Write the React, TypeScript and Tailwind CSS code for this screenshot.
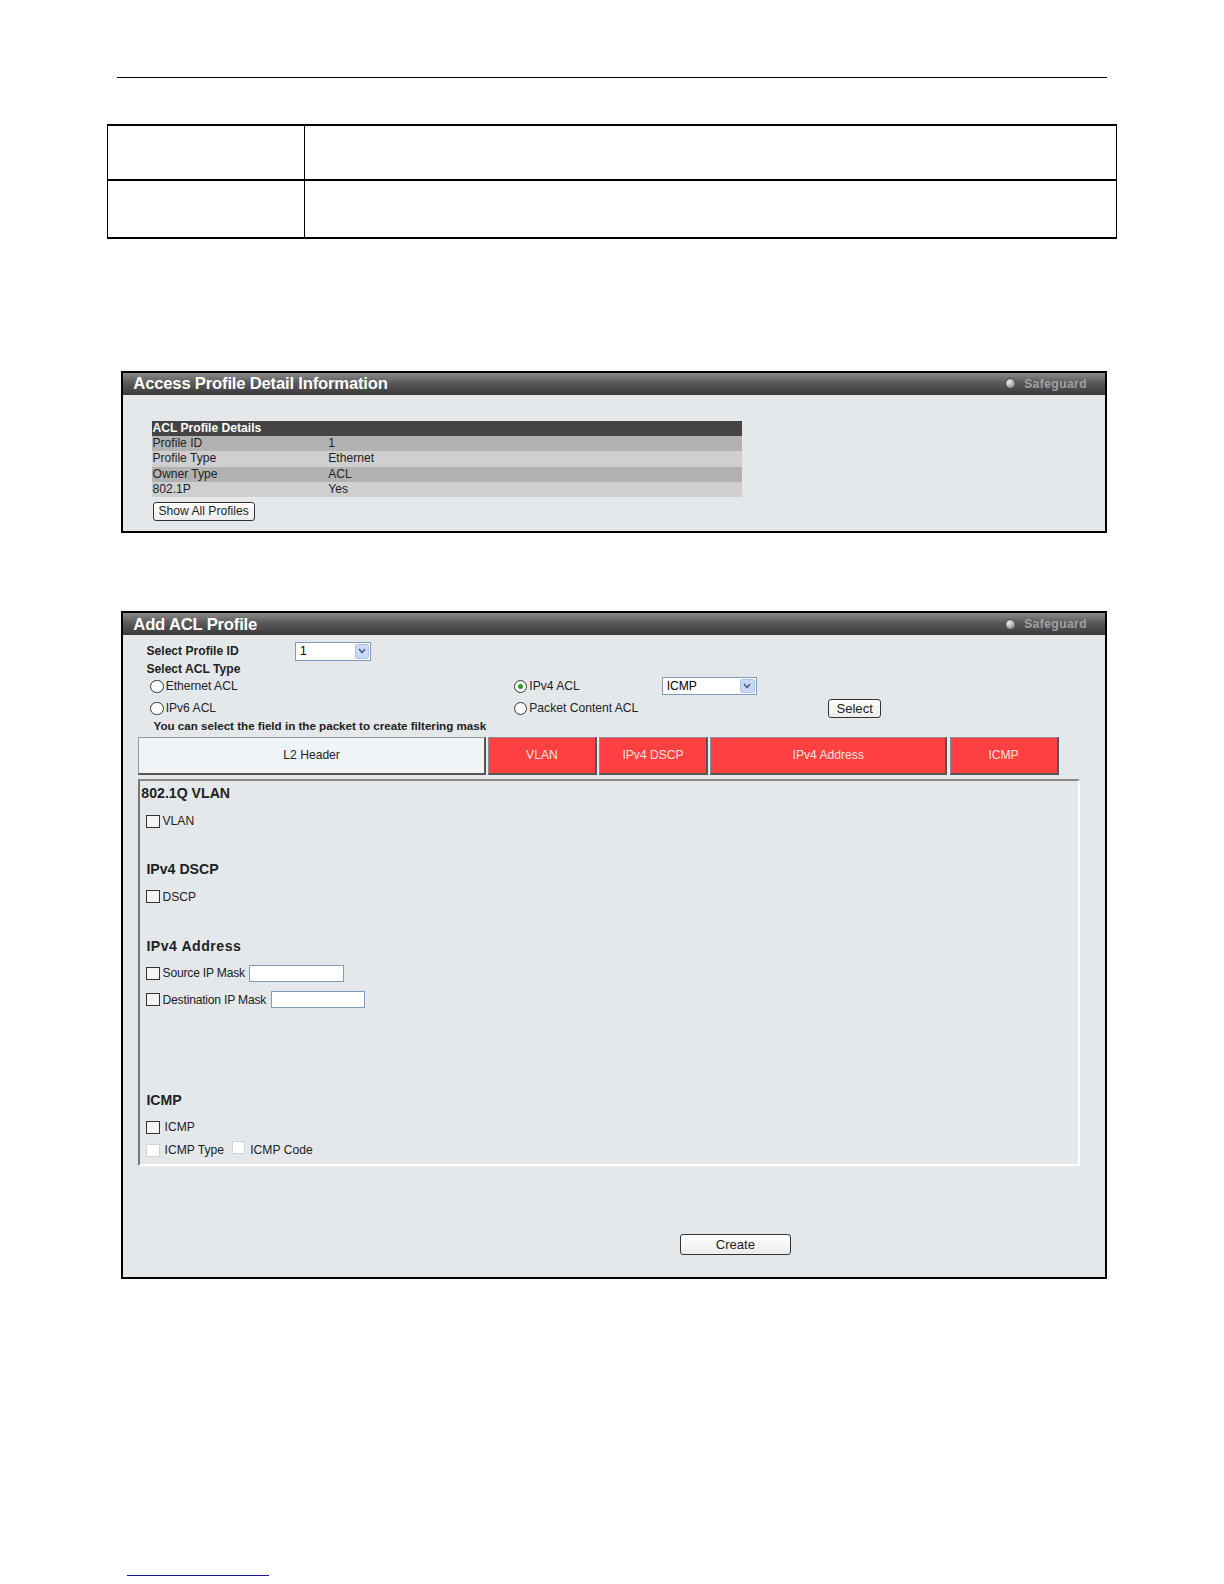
import React from "react"

const FONT = { fontFamily: "'Liberation Sans', Arial, sans-serif" }

function Header({ title }: { title: string }) {
  return (
    <div className="flex items-center justify-between h-[22px] px-[10px] bg-[linear-gradient(to_bottom,#8a8a8a_0%,#5a5a5a_45%,#3a3a3a_100%)]">
      <span className="text-white text-[16.5px] font-bold tracking-[-0.2px]">{title}</span>
      <span className="flex items-center gap-[8px] mr-[8px]">
        <span className="w-[11px] h-[11px] rounded-full bg-[radial-gradient(circle_at_35%_35%,#f0f0f0,#6a6a6a)] border border-[#444]" />
        <span className="text-[12px] text-[#a0a0a0] font-bold tracking-[0.4px]">Safeguard</span>
      </span>
    </div>
  )
}

function Radio({ checked }: { checked?: boolean }) {
  return (
    <span className="inline-flex items-center justify-center w-[13px] h-[13px] rounded-full border border-[#333] bg-white mr-[2px]">
      {checked && <span className="w-[5px] h-[5px] rounded-full bg-[#2a9a2a]" />}
    </span>
  )
}

function Check({ disabled }: { disabled?: boolean }) {
  return (
    <span className={`inline-block w-[13px] h-[13px] border mr-[3px] ${disabled ? "border-[#d0d4d6] bg-white" : "border-[#333] bg-[#f3f5f5]"}`} />
  )
}

function Select({ value, w }: { value: string; w: string }) {
  return (
    <span className={`inline-flex items-center justify-between h-[18px] border border-[#7f9db9] bg-white pl-[4px] pr-[1px] ${w}`}>
      <span className="text-[12px] text-black">{value}</span>
      <span className="flex items-center justify-center w-[14px] h-[14px] bg-[#c9d8f5] border border-[#b0c4ea] rounded-[2px]">
        <svg width="8" height="6" viewBox="0 0 8 6"><path d="M1 1 L4 4.5 L7 1" stroke="#4d6185" strokeWidth="1.6" fill="none" /></svg>
      </span>
    </span>
  )
}

export default function App() {
  const details = [
    ["Profile ID", "1", "bg-[#b2b2b2]"],
    ["Profile Type", "Ethernet", "bg-[#cfcfcf]"],
    ["Owner Type", "ACL", "bg-[#b2b2b2]"],
    ["802.1P", "Yes", "bg-[#cfcfcf]"],
  ]

  const tabs = [
    ["VLAN", "w-[108px]"],
    ["IPv4 DSCP", "w-[108px]"],
    ["IPv4 Address", "w-[235px]"],
    ["ICMP", "w-[108px]"],
  ]

  return (
    <div className="w-[1211px] h-[1567px] overflow-hidden bg-white text-[#222] [zoom:1.0102]" style={FONT}>
      <div className="pt-[76px] pl-[116px]">
        <div className="w-[980px] h-px bg-black" />
      </div>

      <div className="ml-[106px] mt-[46px] w-[1000px] border border-t-2 border-b-2 border-black">
        <div className="flex h-[54px] border-b-2 border-black">
          <div className="w-[195px] border-r border-black" />
          <div className="flex-1" />
        </div>
        <div className="flex h-[56px]">
          <div className="w-[195px] border-r border-black" />
          <div className="flex-1" />
        </div>
      </div>

      <div className="ml-[120px] mt-[130px] w-[976px] h-[161px] border-2 border-black bg-[#e4e8eb]">
        <Header title="Access Profile Detail Information" />
        <div className="pl-[28px] pt-[26px]">
          <div className="w-[585px] text-[12px] leading-[15px]">
            <div className="h-[15px] bg-[#444] text-white font-bold pl-[1px]">ACL Profile Details</div>
            {details.map(([k, v, bg]) => (
              <div key={k} className={`flex h-[15px] pl-[1px] ${bg}`}>
                <span className="w-[174px]">{k}</span>
                <span>{v}</span>
              </div>
            ))}
          </div>
          <button className="mt-[4px] ml-[1px] h-[18px] px-[5px] border border-[#333] rounded-[3px] bg-[linear-gradient(#ffffff,#ececec)] text-[12px] leading-[15px]">
            Show All Profiles
          </button>
        </div>
      </div>

      <div className="ml-[120px] mt-[77px] w-[976px] h-[661px] border-2 border-black bg-[#e4e8eb] flex flex-col">
        <Header title="Add ACL Profile" />
        <div className="pl-[23px] pt-[7px] text-[12px]">
          <div className="flex items-center h-[18px]">
            <span className="w-[147px] font-bold">Select Profile ID</span>
            <Select value="1" w="w-[75px]" />
          </div>
          <div className="h-[17px] leading-[17px] font-bold">Select ACL Type</div>
          <div className="flex items-center h-[17px]">
            <span className="w-[364px] pl-[4px] flex items-center"><Radio />Ethernet ACL</span>
            <span className="w-[146px] flex items-center"><Radio checked />IPv4 ACL</span>
            <Select value="ICMP" w="w-[94px]" />
          </div>
          <div className="flex items-center h-[21px] mt-[3px]">
            <span className="w-[364px] pl-[4px] flex items-center"><Radio />IPv6 ACL</span>
            <span className="w-[311px] flex items-center"><Radio />Packet Content ACL</span>
            <button className="h-[19px] px-[7px] border border-[#333] rounded-[3px] bg-[linear-gradient(#ffffff,#ececec)] text-[13px] leading-[15px]">Select</button>
          </div>
          <div className="pl-[7px] h-[14px] leading-[14px] font-bold text-[11.5px]">
            You can select the field in the packet to create filtering mask
          </div>
        </div>

        <div className="ml-[15px] mt-[4px] flex gap-[2px] h-[37px] text-[12px]">
          <div className="w-[344px] flex items-center justify-center bg-[#f1f4f6] border border-[#999] border-b-2 border-b-[#555] border-r-2 border-r-[#555] text-[#222]">L2 Header</div>
          {tabs.map(([t, w]) => (
            <div key={t} className={`${w} flex items-center justify-center bg-[#ff4040] border border-[#8a8a9a] border-b-2 border-b-[#555] border-r-2 border-r-[#555] text-[#fbe0e0]`}>
              {t}
            </div>
          ))}
        </div>

        <div className="ml-[15px] mt-[4px] w-[932px] h-[383px] border-t-2 border-l-2 border-t-[#888] border-l-[#777] border-r-2 border-b-2 border-r-white border-b-white pl-[1px] text-[12px]">
          <div className="pt-[3px] text-[14px] font-bold leading-[18px]">802.1Q VLAN</div>
          <div className="mt-[11px] pl-[5px] flex items-center h-[16px]"><Check />VLAN</div>

          <div className="mt-[31px] pl-[5px] text-[14px] font-bold leading-[18px]">IPv4 DSCP</div>
          <div className="mt-[10px] pl-[5px] flex items-center h-[16px]"><Check />DSCP</div>

          <div className="mt-[32px] pl-[5px] text-[14px] font-bold leading-[18px] tracking-[0.5px]">IPv4 Address</div>
          <div className="mt-[9px] pl-[5px] flex items-center h-[18px]">
            <Check /><span className="tracking-[-0.2px]">Source IP Mask</span>
            <span className="ml-[4px] w-[94px] h-[17px] border border-[#7f9db9] bg-white" />
          </div>
          <div className="mt-[8px] pl-[5px] flex items-center h-[18px]">
            <Check /><span className="tracking-[-0.2px]">Destination IP Mask</span>
            <span className="ml-[5px] w-[93px] h-[17px] border border-[#7f9db9] bg-white" />
          </div>

          <div className="mt-[81px] pl-[5px] text-[14px] font-bold leading-[18px]">ICMP</div>
          <div className="mt-[10px] pl-[5px] flex items-center h-[16px]"><Check /><span className="ml-[2px]">ICMP</span></div>
          <div className="mt-[7px] pl-[5px] flex items-center h-[16px]">
            <Check disabled /><span className="ml-[2px]">ICMP Type</span>
            <span className="ml-[8px]"><Check disabled /></span><span className="ml-[2px]">ICMP Code</span>
          </div>
        </div>

        <div className="pl-[551px] mt-[65px]">
          <button className="w-[110px] h-[21px] border border-[#333] rounded-[3px] bg-[linear-gradient(#ffffff,#ececec)] text-[13px] leading-[15px]">Create</button>
        </div>
      </div>

      <div className="ml-[126px] mt-[293px] w-[140px] h-px bg-[#1a1aa0]" />
    </div>
  )
}
